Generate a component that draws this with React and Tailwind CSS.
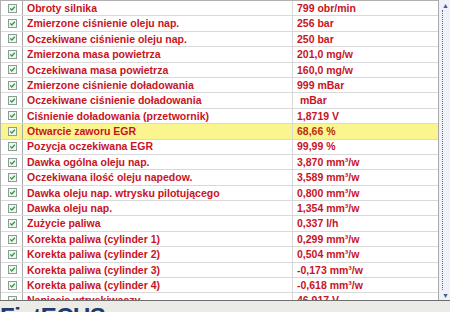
import React from 'react';

const rows = [
  ['Obroty silnika', '799 obr/min'],
  ['Zmierzone ciśnienie oleju nap.', '256 bar'],
  ['Oczekiwane ciśnienie oleju nap.', '250 bar'],
  ['Zmierzona masa powietrza', '201,0 mg/w'],
  ['Oczekiwana masa powietrza', '160,0 mg/w'],
  ['Zmierzone ciśnienie doładowania', '999 mBar'],
  ['Oczekiwane ciśnienie doładowania', '\u00a0mBar'],
  ['Ciśnienie doładowania (przetwornik)', '1,8719 V'],
  ['Otwarcie zaworu EGR', '68,66 %', true],
  ['Pozycja oczekiwana EGR', '99,99 %'],
  ['Dawka ogólna oleju nap.', '3,870 mm³/w'],
  ['Oczekiwana ilość oleju napedow.', '3,589 mm³/w'],
  ['Dawka oleju nap. wtrysku pilotującego', '0,800 mm³/w'],
  ['Dawka oleju nap.', '1,354 mm³/w'],
  ['Zużycie paliwa', '0,337 l/h'],
  ['Korekta paliwa (cylinder 1)', '0,299 mm³/w'],
  ['Korekta paliwa (cylinder 2)', '0,504 mm³/w'],
  ['Korekta paliwa (cylinder 3)', '-0,173 mm³/w'],
  ['Korekta paliwa (cylinder 4)', '-0,618 mm³/w'],
  ['Napięcie wtryskiwaczy', '46,917 V'],
];

function Check() {
  return (
    <svg width="9" height="9" viewBox="0 0 9 9" className="block">
      <rect x="0.5" y="0.5" width="8" height="8" fill="#f2f4f2" stroke="#8c9c94" />
      <path d="M2.2 4.4 L3.8 6 L6.8 2.8" fill="none" stroke="#2f9a3a" strokeWidth="1.3" />
    </svg>
  );
}

export default function App() {
  return (
    <div className="w-[450px] h-[312px] overflow-hidden bg-[#ecebe6] font-['Liberation_Sans',Arial,sans-serif]">
      <div className="flex h-[301px] w-[460px] border-b border-[#6f6f6f] bg-white overflow-hidden">
        <div className="w-[438px] shrink-0 border-l border-t border-[#b0b0b0]">
          {rows.map(([name, value, hl], i) => (
            <div key={i} className={`flex h-[15.4px] border-b border-[#d9d9d9] ${hl ? 'bg-[#fbf590]' : ''}`}>
              <div className="w-[22px] shrink-0 flex items-center justify-center pl-[1px] border-r border-[#a9a9a9]">
                <Check />
              </div>
              <div className="w-[270px] shrink-0 pl-[4px] border-r border-[#d9d9d9] flex items-center text-[10.5px] font-bold leading-none text-[#c8141e] whitespace-nowrap overflow-hidden">
                {name}
              </div>
              <div className={`flex-1 pl-[4px] flex items-center text-[10.5px] font-bold leading-none whitespace-nowrap ${hl ? 'text-[#b8300c]' : 'text-[#c8141e]'}`}>
                {value}
              </div>
            </div>
          ))}
        </div>
        <div className="w-[17px] shrink-0 border-l border-[#a9a9a9] bg-[#eef1f7] flex flex-col items-start pl-[3px]">
          <div className="h-[10px] flex items-center text-[7px] leading-none text-[#4a5a8a]">▲</div>
          <div className="flex-1 border-l border-dotted border-[#5a6a9a]" />
          <div className="h-[10px] flex items-center text-[7px] leading-none text-[#4a5a8a]">▼</div>
        </div>
      </div>
      <div className="pt-[4px] text-[24px] font-bold leading-none text-[#1d3b6e] whitespace-nowrap tracking-[-0.5px]">
        FiatECUScan
      </div>
    </div>
  );
}
